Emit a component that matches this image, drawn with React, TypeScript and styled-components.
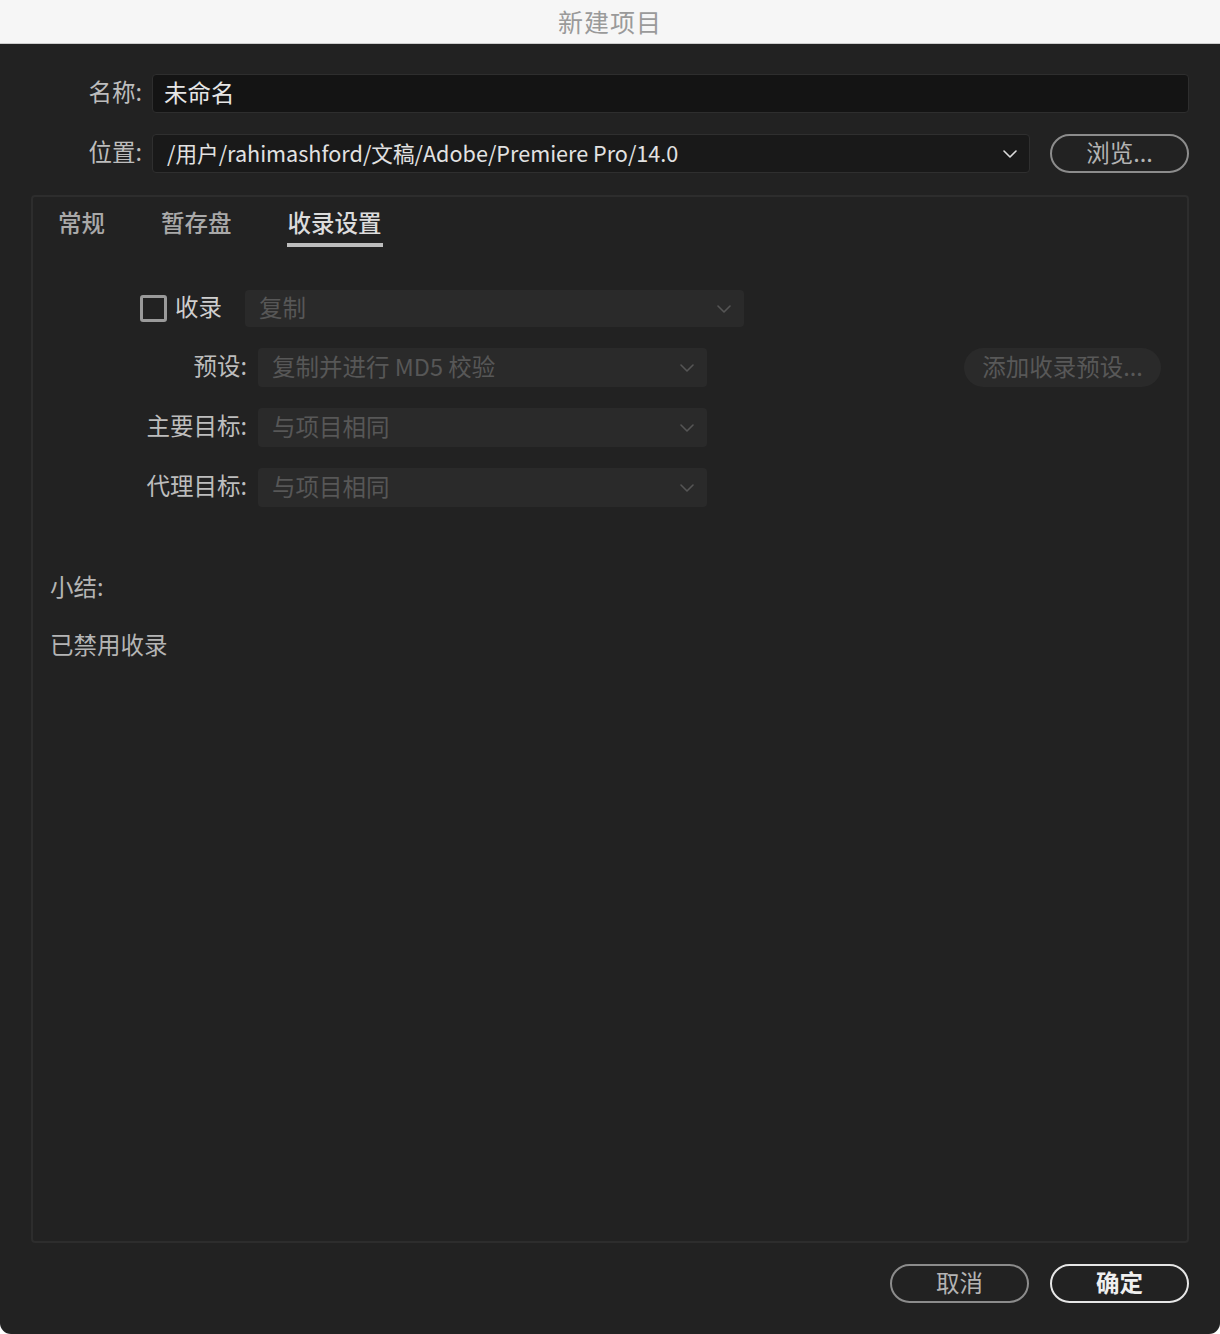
import React from "react";
import styled, { createGlobalStyle } from "styled-components";

const Global = createGlobalStyle`
  html, body { margin: 0; padding: 0; background: #ffffff; }
  body { font-family: "Noto Sans CJK SC", "Noto Sans", sans-serif; }
  * { box-sizing: border-box; }
`;

const Window = styled.div`
  width: 1220px;
  height: 1334px;
  background: #222222;
  border-radius: 0 0 11px 11px;
  display: flex;
  flex-direction: column;
  overflow: hidden;
`;

const TitleBar = styled.div`
  height: 44px;
  flex: none;
  background: #f6f6f6;
  border-bottom: 1px solid #cdcdcd;
  display: flex;
  align-items: center;
  justify-content: center;
  color: #9a9a9a;
  font-size: 25px;
  letter-spacing: 1px;
  padding-bottom: 1px;
`;

const Body = styled.div`
  flex: 1;
  display: flex;
  flex-direction: column;
  padding: 30px 31px 31px 31px;
`;

const FieldRow = styled.div`
  display: grid;
  grid-template-columns: 111px 1fr auto;
  column-gap: 10px;
  align-items: center;
  height: 39px;
  margin-bottom: 21px;
`;

const FieldLabel = styled.div`
  color: #bdbdbd;
  font-size: 23.5px;
  text-align: right;
  line-height: 1;
  padding-bottom: 3px;
`;

const TextInput = styled.div`
  height: 39px;
  background: #141414;
  border: 1px solid #2e2e2e;
  border-radius: 4px;
  display: flex;
  align-items: center;
  padding: 0 0 3px 11px;
  color: #e6e6e6;
  font-size: 23.5px;
  grid-column: 2 / 4;
`;

const PathSelect = styled.div`
  height: 39px;
  background: #191919;
  border: 1px solid #2f2f2f;
  border-radius: 4px;
  display: flex;
  align-items: center;
  justify-content: space-between;
  padding: 0 12px 0 14px;
  color: #e2e2e2;
  font-size: 21.6px;
  margin-right: 10px;
  & > span {
    padding-bottom: 3px;
  }
`;

const PillButton = styled.button<{ $primary?: boolean }>`
  width: 139px;
  height: 39px;
  border-radius: 20px;
  background: transparent;
  border: 2px solid ${(p) => (p.$primary ? "#e6e6e6" : "#8c8c8c")};
  color: ${(p) => (p.$primary ? "#efefef" : "#b4b4b4")};
  font-family: inherit;
  font-size: 23.5px;
  font-weight: ${(p) => (p.$primary ? 700 : 400)};
  display: flex;
  align-items: center;
  justify-content: center;
  padding: 0 0 3px 0;
  margin: 0;
`;

const Panel = styled.div`
  margin-top: 1px;
  flex: 1;
  border: 2px solid #2d2d2d;
  border-radius: 4px;
  display: flex;
  flex-direction: column;
`;

const Tabs = styled.div`
  display: flex;
  gap: 56px;
  padding: 9px 0 0 25px;
`;

const Tab = styled.div<{ $active?: boolean }>`
  font-size: 23.5px;
  color: ${(p) => (p.$active ? "#dcdcdc" : "#a9a9a9")};
  font-weight: 500;
  padding-bottom: 5px;
  line-height: 32px;
  border-bottom: 4px solid ${(p) => (p.$active ? "#bdbdbd" : "transparent")};
  margin: 0 ${(p) => (p.$active ? "-1px" : "0")};
  padding-left: ${(p) => (p.$active ? "1px" : "0")};
  padding-right: ${(p) => (p.$active ? "1px" : "0")};
`;

const Ingest = styled.div`
  display: flex;
  flex-direction: column;
  gap: 21px;
  margin-top: 43px;
  padding-right: 26px;
`;

const CheckRow = styled.div`
  display: flex;
  align-items: center;
  height: 37px;
  padding-left: 107px;
`;

const Checkbox = styled.span`
  width: 27px;
  height: 27px;
  border: 3px solid #9a9a9a;
  border-radius: 3px;
  flex: none;
`;

const CheckLabel = styled.span`
  color: #cfcfcf;
  font-size: 23.5px;
  margin: 0 23px 0 8px;
  line-height: 1;
  padding-bottom: 3px;
`;

const SettingRow = styled.div`
  display: grid;
  grid-template-columns: 214px 449px 1fr auto;
  column-gap: 11px;
  align-items: center;
  height: 39px;
`;

const Dropdown = styled.div<{ $w?: number; $h?: number }>`
  ${(p) => (p.$w ? `width: ${p.$w}px;` : "")}
  height: ${(p) => p.$h ?? 39}px;
  background: #2a2a2a;
  border-radius: 4px;
  display: flex;
  align-items: center;
  justify-content: space-between;
  padding: 0 13px 0 14px;
  color: #575757;
  font-size: 23.5px;
  & > span {
    padding-bottom: 3px;
  }
`;

const GhostButton = styled.div`
  grid-column: 4;
  width: 197px;
  height: 39px;
  border-radius: 20px;
  background: #2a2a2a;
  color: #585858;
  font-size: 23.5px;
  display: flex;
  align-items: center;
  justify-content: center;
  padding-bottom: 3px;
`;

const Summary = styled.div`
  margin-top: 65px;
  padding-left: 17px;
  display: flex;
  flex-direction: column;
  gap: 30px;
  color: #b5b5b5;
  font-size: 23.5px;
  line-height: 28px;
`;

const Footer = styled.div`
  display: flex;
  justify-content: flex-end;
  gap: 21px;
  margin-top: 21px;
`;

const Chevron = ({ color }: { color: string }) => (
  <svg width="14" height="8" viewBox="0 0 14 8" fill="none">
    <path d="M1 1l6 6 6-6" stroke={color} strokeWidth="1.6" strokeLinecap="round" strokeLinejoin="round" />
  </svg>
);

export default function App() {
  return (
    <>
      <Global />
      <Window>
        <TitleBar>新建项目</TitleBar>
        <Body>
          <FieldRow>
            <FieldLabel>名称:</FieldLabel>
            <TextInput>未命名</TextInput>
          </FieldRow>
          <FieldRow>
            <FieldLabel>位置:</FieldLabel>
            <PathSelect>
              <span>/用户/rahimashford/文稿/Adobe/Premiere Pro/14.0</span>
              <Chevron color="#dcdcdc" />
            </PathSelect>
            <PillButton>浏览...</PillButton>
          </FieldRow>
          <Panel>
            <Tabs>
              <Tab>常规</Tab>
              <Tab>暂存盘</Tab>
              <Tab $active>收录设置</Tab>
            </Tabs>
            <Ingest>
              <CheckRow>
                <Checkbox />
                <CheckLabel>收录</CheckLabel>
                <Dropdown $w={499} $h={37}>
                  <span>复制</span>
                  <Chevron color="#555555" />
                </Dropdown>
              </CheckRow>
              <SettingRow>
                <FieldLabel>预设:</FieldLabel>
                <Dropdown>
                  <span>复制并进行 MD5 校验</span>
                  <Chevron color="#555555" />
                </Dropdown>
                <GhostButton>添加收录预设...</GhostButton>
              </SettingRow>
              <SettingRow>
                <FieldLabel>主要目标:</FieldLabel>
                <Dropdown>
                  <span>与项目相同</span>
                  <Chevron color="#555555" />
                </Dropdown>
              </SettingRow>
              <SettingRow>
                <FieldLabel>代理目标:</FieldLabel>
                <Dropdown>
                  <span>与项目相同</span>
                  <Chevron color="#555555" />
                </Dropdown>
              </SettingRow>
            </Ingest>
            <Summary>
              <div>小结:</div>
              <div>已禁用收录</div>
            </Summary>
          </Panel>
          <Footer>
            <PillButton>取消</PillButton>
            <PillButton $primary>确定</PillButton>
          </Footer>
        </Body>
      </Window>
    </>
  );
}
